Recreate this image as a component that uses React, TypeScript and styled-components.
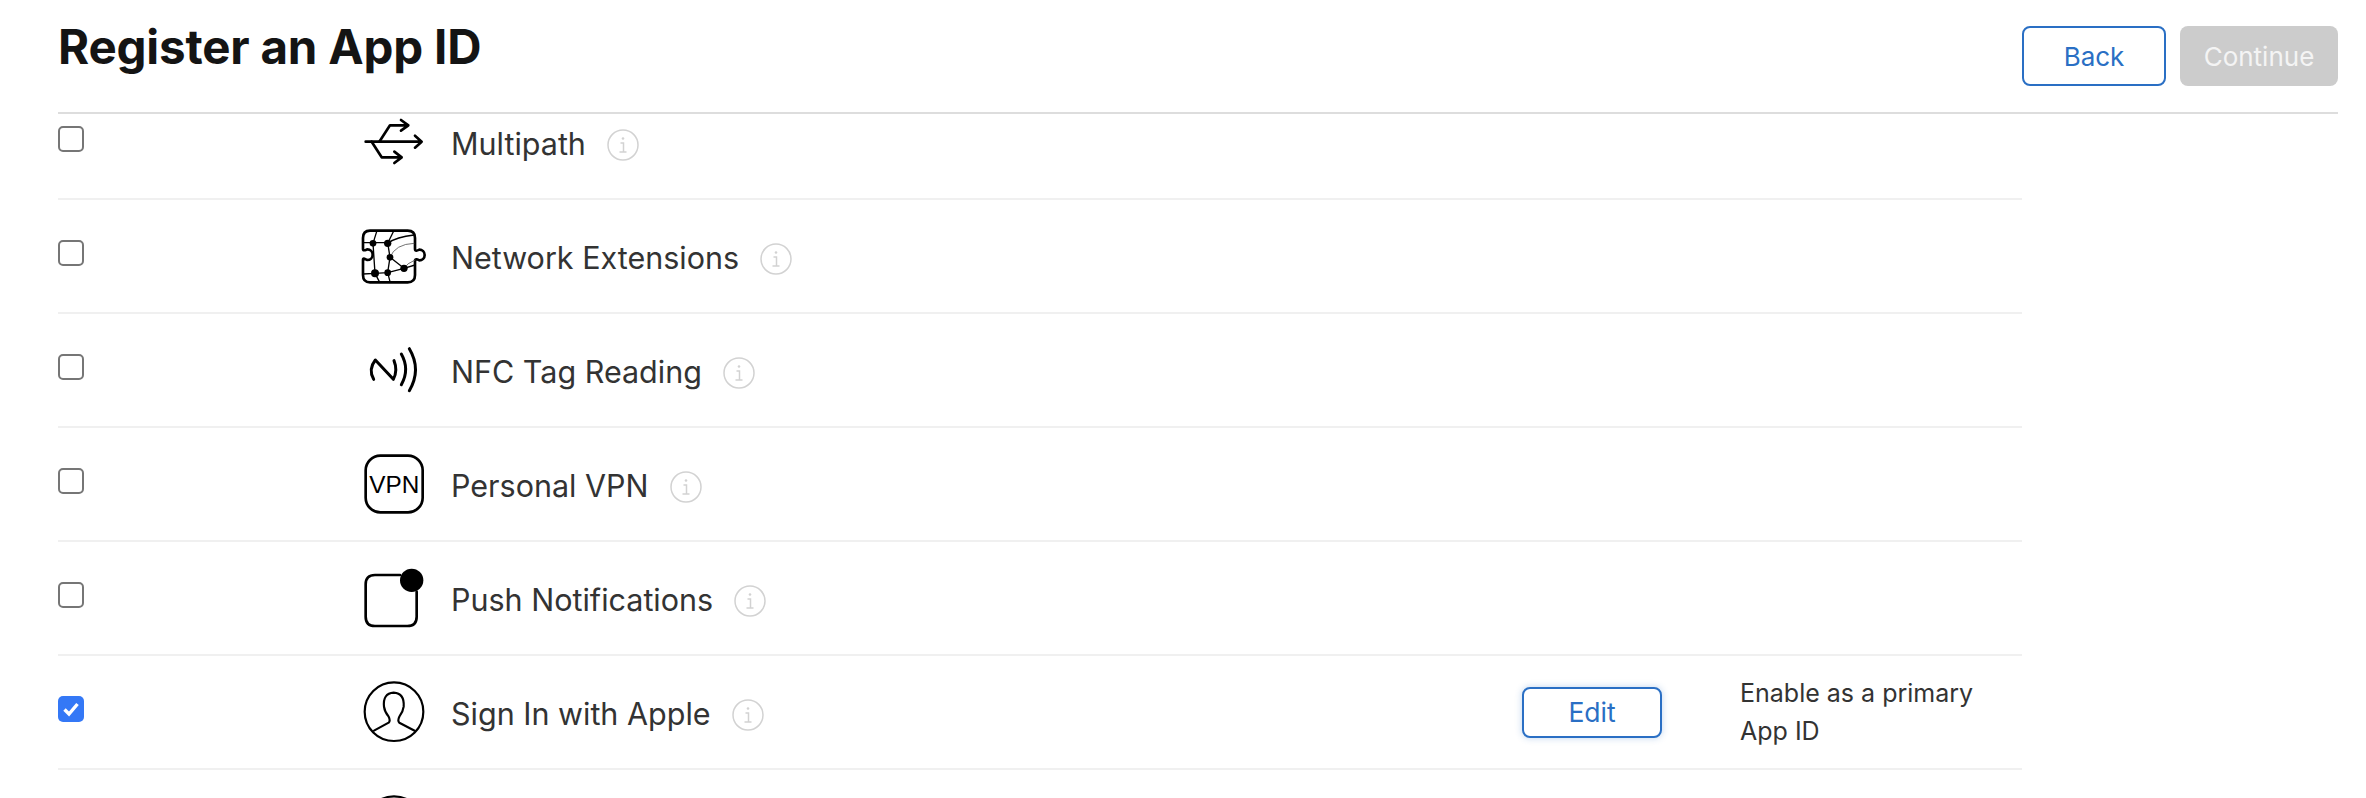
import { ReactNode } from 'react';
import styled, { createGlobalStyle } from 'styled-components';

const GlobalStyle = createGlobalStyle`
  html, body {
    margin: 0;
    height: 798px;
    overflow: hidden;
    background: #fff;
    font-family: Inter, "Liberation Sans", sans-serif;
  }
`;

const Page = styled.div`
  height: 798px;
  padding: 0 28px 0 58px;
  box-sizing: border-box;
  display: flex;
  flex-direction: column;
  overflow: hidden;
`;

const Header = styled.header`
  flex: none;
  height: 114px;
  box-sizing: border-box;
  padding-top: 23px;
  border-bottom: 2px solid #ddd;
  display: flex;
  justify-content: space-between;
  align-items: flex-start;
`;

const Title = styled.h1`
  margin: 0;
  font-size: 47.5px;
  line-height: 48px;
  font-weight: 700;
  letter-spacing: -0.2px;
  color: #141414;
`;

const Actions = styled.div`
  display: flex;
  gap: 14px;
  padding-top: 3px;
`;

const Button = styled.button<{ $disabled?: boolean }>`
  height: 60px;
  width: ${(p) => (p.$disabled ? '158px' : '144px')};
  box-sizing: border-box;
  border-radius: 8px;
  font: 400 26px Inter, "Liberation Sans", sans-serif;
  color: ${(p) => (p.$disabled ? '#f4f4f4' : '#2a6fc4')};
  background: ${(p) => (p.$disabled ? '#ccc' : '#fff')};
  border: ${(p) => (p.$disabled ? 'none' : '2px solid #2a6fc4')};
`;

const List = styled.div`
  flex: 1;
  min-height: 0;
  overflow: hidden;
  width: 1964px;
`;

const Rows = styled.div`
  margin-top: -28px;
`;

const Row = styled.div`
  height: 114px;
  box-sizing: border-box;
  border-bottom: 2px solid #f0f0f0;
  display: flex;
  align-items: center;
`;

const CheckCell = styled.div`
  width: 301px;
  align-self: flex-start;
  padding-top: 40px;
`;

const Checkbox = styled.span<{ $checked?: boolean }>`
  display: flex;
  align-items: center;
  justify-content: center;
  width: 26px;
  height: 26px;
  box-sizing: border-box;
  border-radius: 5px;
  background: ${(p) => (p.$checked ? '#3478f6' : '#fff')};
  border: ${(p) => (p.$checked ? 'none' : '2px solid #767676')};
`;

const IconBox = styled.svg`
  width: 70px;
  height: 70px;
  flex: none;
  fill: none;
  stroke: #000;
  stroke-width: 8;
  stroke-linecap: round;
  stroke-linejoin: round;
`;

const Label = styled.span`
  margin-left: 22px;
  padding-top: 2px;
  font-size: 30.5px;
  color: #333;
`;

const InfoIcon = styled.svg`
  width: 32px;
  height: 32px;
  margin: 6px 0 0 21px;
  flex: none;
  fill: none;
  stroke: #d2d2d2;
  stroke-width: 1.5;
`;

const EditSlot = styled.div`
  margin-left: auto;
  width: 218px;
`;

const EditButton = styled.button`
  width: 140px;
  height: 51px;
  box-sizing: border-box;
  border: 2px solid #2a6fc4;
  border-radius: 8px;
  background: #fff;
  box-shadow: 0 0 7px rgba(42, 111, 196, 0.3);
  font: 400 26.5px Inter, "Liberation Sans", sans-serif;
  color: #2a6fc4;
`;

const Note = styled.div`
  width: 282px;
  padding-right: 20px;
  box-sizing: border-box;
  font-size: 25px;
  line-height: 38px;
  color: #333;
`;

const Info = () => (
  <InfoIcon viewBox="0 0 32 32">
    <circle cx="16" cy="16" r="15" />
    <circle cx="16" cy="9.5" r="1.3" fill="#d2d2d2" stroke="none" />
    <path d="M13.5 14h3v9M12.5 23h7" />
  </InfoIcon>
);

const MultipathIcon = () => (
  <IconBox viewBox="57 21 210 210">
    <path d="M77 125H243M225 107l20 18-20 18" />
    <path d="M118 125L150 76H203M183 60l22 16-22 16" />
    <path d="M95 125L125 172H183M163 155l22 17-22 17" />
  </IconBox>
);

const NetworkIcon = () => (
  <IconBox viewBox="57 363 210 210">
    <path d="M90 392H203Q225 392 225 414V447C225 455 232 452 238 449A16 16 0 1 1 238 481C232 478 225 475 225 483V525Q225 547 203 547H90Q69 547 69 525V480C69 472 76 478 82 480A16 16 0 0 0 82 448C76 450 69 454 69 446V414Q69 392 90 392Z" />
    <path strokeWidth="4" d="M72 428H143L150 472L192 505L225 495M110 395L99 430L105 520L69 522M160 395L143 430M143 518L105 520M143 518L192 505M143 518L150 472M143 518L150 545M105 520L118 545M143 430Q170 410 222 405" />
    <path strokeWidth="2.5" stroke="#555" d="M150 472Q165 432 222 430M192 505Q200 490 225 480" />
    <g fill="#000" stroke="none">
      <circle cx="99" cy="430" r="10" />
      <circle cx="143" cy="430" r="11" />
      <circle cx="150" cy="472" r="10" />
      <circle cx="192" cy="505" r="11" />
      <circle cx="143" cy="518" r="10" />
      <circle cx="105" cy="520" r="12" />
    </g>
  </IconBox>
);

const NfcIcon = () => (
  <IconBox viewBox="57 15 210 210">
    <path strokeWidth="9" d="M101 148Q84 118 106 90L160 148Q174 122 162 92" />
    <path strokeWidth="9" d="M184 72Q210 118 184 164" />
    <path strokeWidth="9" d="M208 56Q245 118 208 182" />
  </IconBox>
);

const VpnIcon = () => (
  <IconBox viewBox="57 357 210 210">
    <rect x="77" y="377" width="171" height="170" rx="44" />
    <text x="163" y="489" textAnchor="middle" fontFamily="Liberation Sans, Arial, sans-serif" fontSize="73" fill="#000" stroke="none">VPN</text>
  </IconBox>
);

const PushIcon = () => (
  <IconBox viewBox="57 39 210 210">
    <path d="M180 75H105Q77 75 77 103V200Q77 228 105 228H202Q230 228 230 200V125" />
    <circle cx="215" cy="91" r="35" fill="#000" stroke="none" />
  </IconBox>
);

const AppleIdIcon = () => (
  <IconBox viewBox="57 381 210 210">
    <circle cx="162" cy="485" r="88" strokeWidth="6.5" />
    <path strokeWidth="6.5" d="M102 542L146 518Q152 512 146 500Q134 486 132 470Q128 430 161 428Q194 430 191 470Q189 486 178 500Q172 512 178 518L224 542" />
  </IconBox>
);

const SiriIcon = () => (
  <IconBox viewBox="57 381 210 210">
    <circle cx="162" cy="485" r="88" strokeWidth="6.5" />
  </IconBox>
);

interface Capability {
  name: string;
  icon: ReactNode;
  checked?: boolean;
  editable?: boolean;
}

const capabilities: Capability[] = [
  { name: 'Multipath', icon: <MultipathIcon /> },
  { name: 'Network Extensions', icon: <NetworkIcon /> },
  { name: 'NFC Tag Reading', icon: <NfcIcon /> },
  { name: 'Personal VPN', icon: <VpnIcon /> },
  { name: 'Push Notifications', icon: <PushIcon /> },
  { name: 'Sign In with Apple', icon: <AppleIdIcon />, checked: true, editable: true },
];

const App = () => {
  return (
    <Page>
      <GlobalStyle />
      <Header>
        <Title>Register an App ID</Title>
        <Actions>
          <Button>Back</Button>
          <Button $disabled disabled>Continue</Button>
        </Actions>
      </Header>
      <List>
        <Rows>
          {capabilities.map((c) => (
            <Row key={c.name}>
              <CheckCell>
                <Checkbox $checked={c.checked}>
                  {c.checked && (
                    <svg width="20" height="20" viewBox="0 0 20 20" fill="none" stroke="#fff" strokeWidth="3.4">
                      <path d="M3.5 10.5L8 15L16.5 5" />
                    </svg>
                  )}
                </Checkbox>
              </CheckCell>
              {c.icon}
              <Label>{c.name}</Label>
              <Info />
              {c.editable && (
                <>
                  <EditSlot>
                    <EditButton>Edit</EditButton>
                  </EditSlot>
                  <Note>Enable as a primary App ID</Note>
                </>
              )}
            </Row>
          ))}
          <Row>
            <CheckCell />
            <SiriIcon />
          </Row>
        </Rows>
      </List>
    </Page>
  );
};

export default App;
